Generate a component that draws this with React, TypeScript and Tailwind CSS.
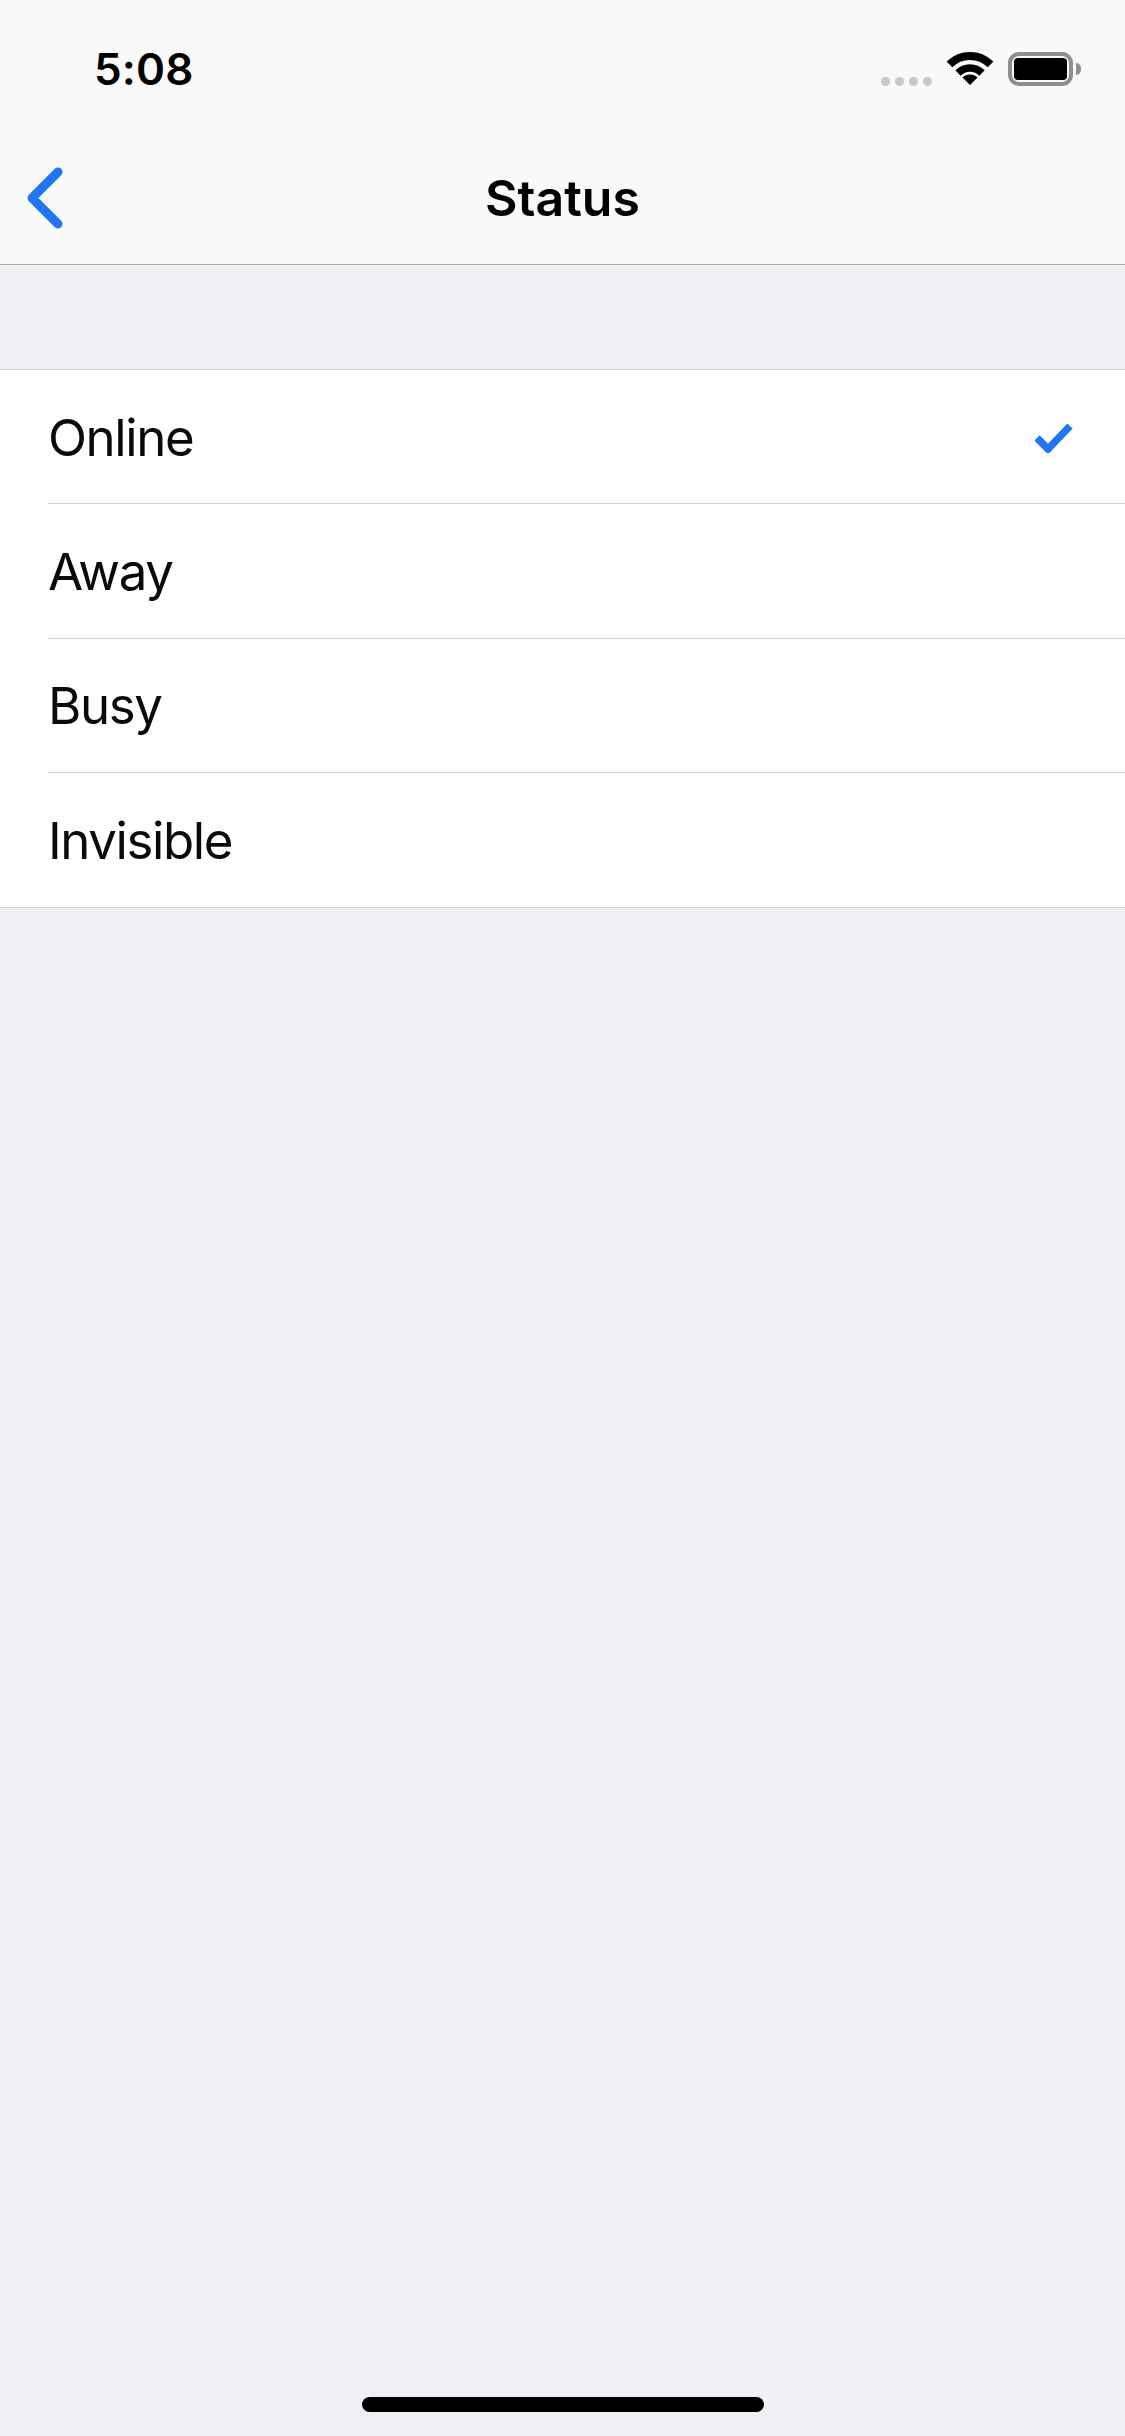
import React from 'react'

const rows = ['Online', 'Away', 'Busy', 'Invisible']

const Wifi = () => (
  <svg width="46" height="34" viewBox="0 0 46 34" fill="none">
    <path d="M2.5 12.5A29 29 0 0 1 43.5 12.5" stroke="#000" strokeWidth="8" />
    <path d="M11 21A17 17 0 0 1 35 21" stroke="#000" strokeWidth="7.5" />
    <path d="M15.5 25.5A10.6 10.6 0 0 1 30.5 25.5L23 33Z" fill="#000" />
  </svg>
)

const Battery = () => (
  <div className="flex items-center gap-[3px]">
    <div className="w-[65px] h-[34px] rounded-[11px] border-[4px] border-[#8e8e8e] p-[2px]">
      <div className="w-full h-full rounded-[4px] bg-black" />
    </div>
    <div className="w-[5px] h-[12px] rounded-r-full bg-[#8e8e8e]" />
  </div>
)

const App = () => {
  return (
    <div className="flex flex-col h-[2436px] bg-[#efeff4] font-['Inter',sans-serif] text-black">
      <header className="bg-[#f9f9f9] border-b border-[#a9a9ae]">
        <div className="flex justify-between items-end h-[88px] pl-[94px] pr-[44px]">
          <span className="text-[44px] leading-[44px] font-semibold mb-[-3px] tracking-[0.2px]">5:08</span>
          <div className="flex items-end">
            <div className="flex gap-[5px] mb-[2px] mr-[15px]">
              <div className="w-[9px] h-[9px] rounded-full bg-[#c8c8c8]" />
              <div className="w-[9px] h-[9px] rounded-full bg-[#c8c8c8]" />
              <div className="w-[9px] h-[9px] rounded-full bg-[#c8c8c8]" />
              <div className="w-[9px] h-[9px] rounded-full bg-[#c8c8c8]" />
            </div>
            <div className="mr-[15px] mb-[2px]"><Wifi /></div>
            <div className="mb-[2px]"><Battery /></div>
          </div>
        </div>
        <div className="relative flex items-center justify-center h-[176px]">
          <svg className="absolute left-[20px] top-[76px]" width="50" height="70" viewBox="0 0 50 70" fill="none">
            <path d="M38 8L12 34L38 60" stroke="#2176f6" strokeWidth="9" strokeLinecap="round" strokeLinejoin="round" />
          </svg>
          <span className="text-[50px] font-semibold leading-none mt-[44px]">Status</span>
        </div>
      </header>

      <ul className="mt-[104px] bg-white border-y border-[#cfcfd2]">
        {rows.map((row, i) => (
          <li key={row} className="pl-[48px]">
            <div className={`flex items-center justify-between h-[134.33px] pr-[52px] ${i < 3 ? 'border-b border-[#cfcfd2]' : ''}`}>
              <span className="text-[51px] leading-none tracking-[-1.4px] mt-[1px] text-[#0a0a0c]">{row}</span>
              {i === 0 && (
                <svg className="mt-[3px]" width="38" height="30" viewBox="0 0 38 30" fill="none">
                  <path d="M2 15L13 26L35 3" stroke="#2176f6" strokeWidth="7.5" />
                </svg>
              )}
            </div>
          </li>
        ))}
      </ul>

      <div className="mt-auto mb-[24px] mx-auto w-[402px] h-[15px] rounded-full bg-black" />
    </div>
  )
}

export default App
